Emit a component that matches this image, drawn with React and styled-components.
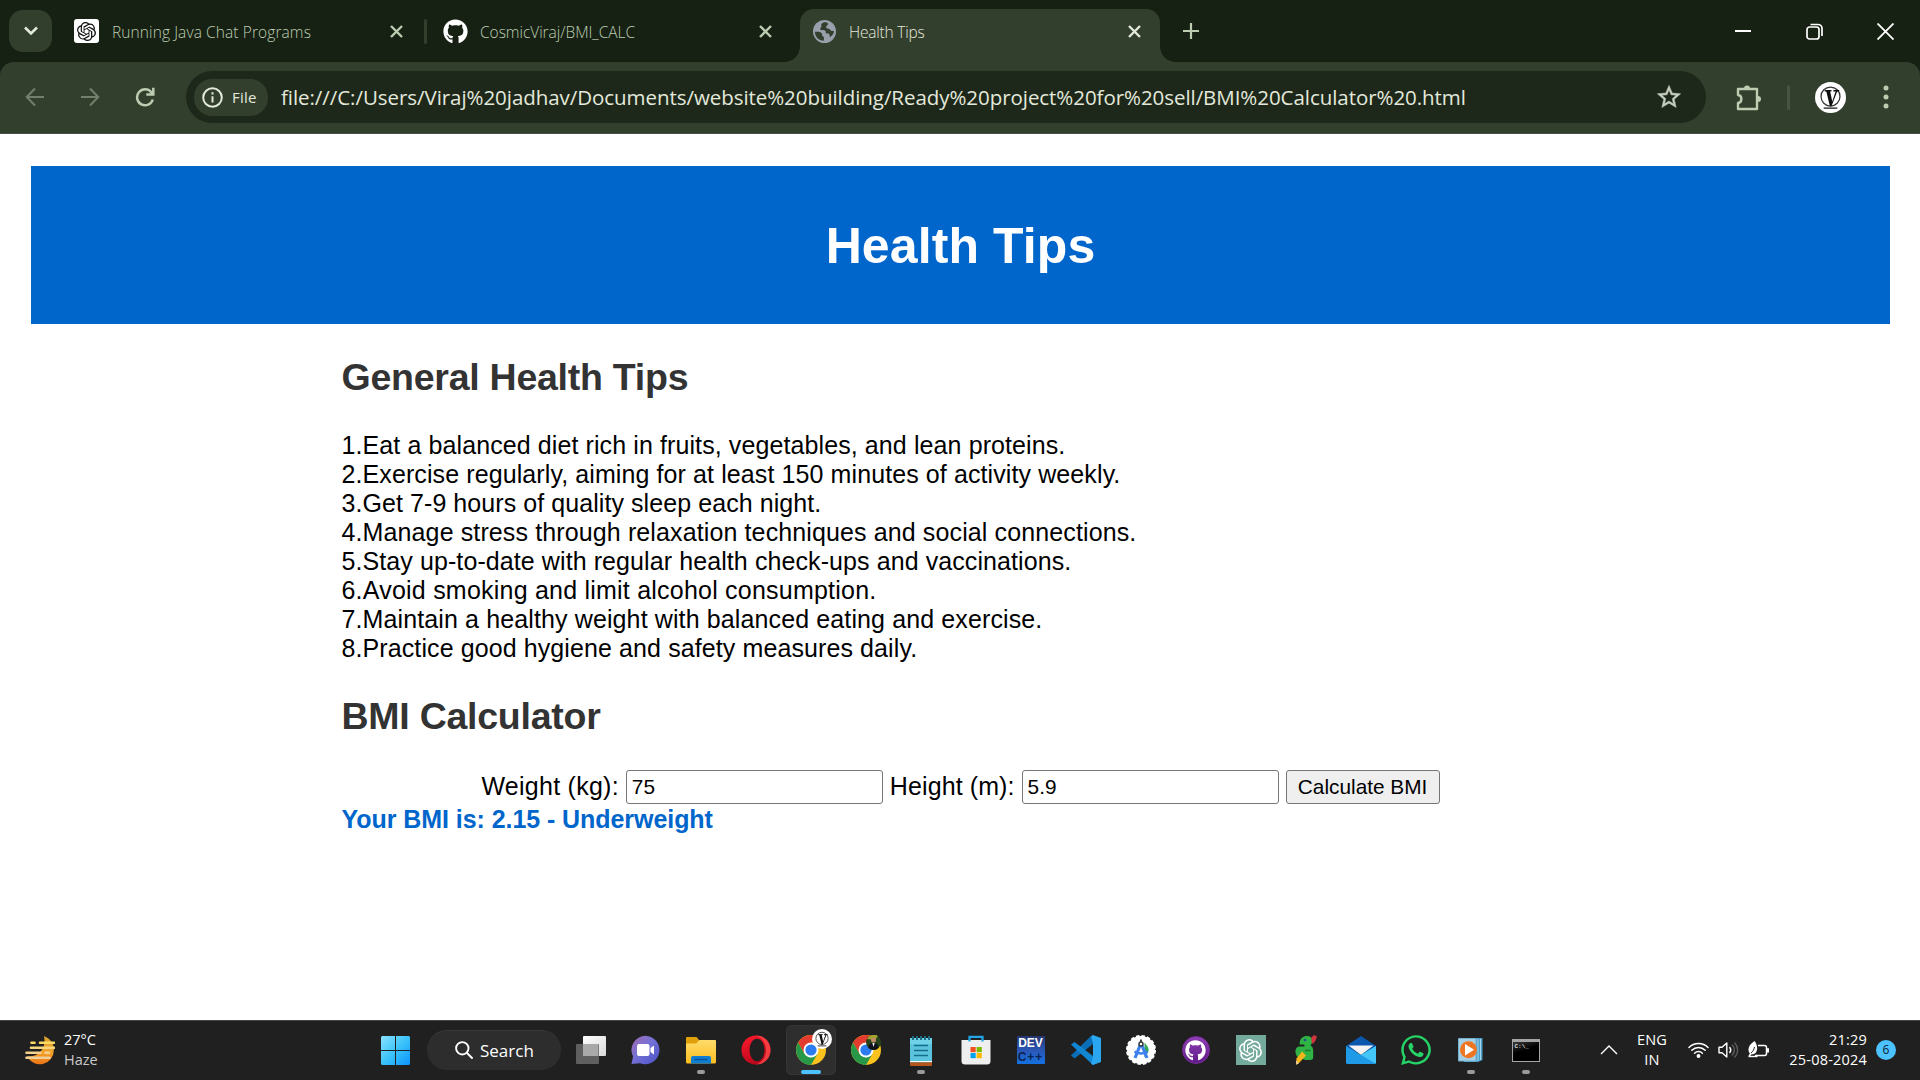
import React from 'react';
import styled, { createGlobalStyle } from 'styled-components';
import { FaGithub, FaWhatsapp } from 'react-icons/fa';
import { SiOpenai } from 'react-icons/si';

const GlobalStyle = createGlobalStyle`
  * { box-sizing: border-box; }
  body { margin: 0; background: #fff; overflow: hidden; }
  svg { display: block; flex: none; }
`;

const ui = `'Open Sans', 'Noto Sans', sans-serif`;
const page = `'Liberation Sans', Arial, sans-serif`;

const Screen = styled.div`
  width: 1920px;
  height: 1080px;
  display: flex;
  flex-direction: column;
  background: #fff;
`;

/* ---------- browser chrome ---------- */
const TabStrip = styled.header`
  height: 62px;
  flex: none;
  display: flex;
  background: #172113;
  font-family: ${ui};
`;
const TabSearch = styled.button`
  width: 43px;
  height: 42px;
  margin: 10px 10px 0 9px;
  padding: 0;
  border: 0;
  border-radius: 14px;
  background: #333f2d;
  display: flex;
  align-items: center;
  justify-content: center;
`;
const Tab = styled.div`
  position: relative;
  width: ${(p) => p.$w}px;
  height: ${(p) => (p.$active ? 53 : 44)}px;
  margin-top: 9px;
  padding: 0 ${(p) => p.$right}px 0 ${(p) => p.$left}px;
  display: flex;
  align-items: center;
  color: ${(p) => (p.$active ? '#e3e9dc' : '#bccdb2')};
  ${(p) =>
    p.$active &&
    `
    background: #333f2d;
    border-radius: 14px 14px 0 0;
    padding-bottom: 9px;
    &::before, &::after {
      content: '';
      position: absolute;
      bottom: 0;
      width: 15px;
      height: 15px;
    }
    &::before { left: -15px; background: radial-gradient(circle at 0 0, transparent 14.5px, #333f2d 15px); }
    &::after { right: -15px; background: radial-gradient(circle at 100% 0, transparent 14.5px, #333f2d 15px); }
  `}
`;
const TabTitle = styled.span`
  flex: 1;
  margin-left: ${(p) => p.$gap}px;
  padding-top: 1px;
  font-size: 15.5px;
  font-weight: 300;
  letter-spacing: ${(p) => p.$ls || 0}px;
  white-space: nowrap;
`;
const Tile = styled.span`
  width: 25px;
  height: 24px;
  border-radius: 3px;
  background: #fff;
  color: #111;
  display: flex;
  align-items: center;
  justify-content: center;
`;
const TabDivider = styled.i`
  width: 3px;
  height: 25px;
  margin: 19px 3px 0 -1px;
  border-radius: 2px;
  background: #333f2d;
`;
const NewTab = styled.div`
  margin: 22px 0 0 22px;
`;
const WindowButtons = styled.div`
  margin: 23px 26px 0 auto;
  display: flex;
  gap: 54px;
`;

const ToolbarBack = styled.div`
  height: 72px;
  flex: none;
  background: #172113;
`;
const Toolbar = styled.nav`
  height: 72px;
  display: flex;
  align-items: center;
  padding: 0 31px 1px 25px;
  border-radius: 14px 14px 0 0;
  border-bottom: 1px solid #464c48;
  background: #333f2d;
  color: #bccdb2;
  font-family: ${ui};
`;
const NavButtons = styled.div`
  width: 161px;
  display: flex;
  gap: 35px;
  flex: none;
`;
const Omnibox = styled.div`
  width: 1520px;
  height: 52px;
  padding: 0 23px 0 8px;
  border-radius: 26px;
  background: #1e281a;
  display: flex;
  align-items: center;
`;
const FileChip = styled.span`
  width: 74px;
  height: 37px;
  padding-left: 8px;
  gap: 9px;
  border-radius: 18px;
  background: #333f2d;
  color: #e3e9dc;
  font-size: 15px;
  letter-spacing: 0.2px;
  display: flex;
  align-items: center;
`;
const Url = styled.span`
  flex: 1;
  margin-left: 13px;
  padding-bottom: 1px;
  color: #e3e9dc;
  font-size: 20.5px;
  letter-spacing: -0.055px;
  white-space: nowrap;
`;
const ToolbarDivider = styled.i`
  width: 3px;
  height: 25px;
  margin: 0 25px 0 25px;
  border-radius: 2px;
  background: #48543f;
`;
const ExtensionSlot = styled.span`
  margin-left: 29px;
`;
const MenuSlot = styled.span`
  margin-left: auto;
`;

/* ---------- web page ---------- */
const Page = styled.main`
  height: 886px;
  flex: none;
  padding: 32px 30px 0 31px;
  font-family: ${page};
  font-size: 25px;
  line-height: 29px;
  color: #000;
`;
const Banner = styled.div`
  height: 158px;
  padding-top: 2px;
  background: #0066cc;
  display: flex;
  align-items: center;
  justify-content: center;
`;
const BannerTitle = styled.h1`
  margin: 0;
  font-size: 50px;
  line-height: 58px;
  letter-spacing: 0.1px;
  color: #fff;
`;
const Content = styled.section`
  width: 1238px;
  margin: 0 auto;
`;
const Heading = styled.h2`
  margin: ${(p) => p.$top}px 0 ${(p) => p.$bottom}px;
  font-size: 37.5px;
  line-height: 43px;
  letter-spacing: -0.25px;
  color: #333;
`;
const Tips = styled.div`
  display: flex;
  flex-direction: column;
`;
const Tip = styled.span`
  letter-spacing: ${(p) => p.$ls}px;
`;
const Form = styled.form`
  display: flex;
  align-items: center;
  justify-content: center;
  gap: 7px;
  height: 34px;
`;
const Label = styled.label`
  padding-bottom: 2px;
  letter-spacing: ${(p) => p.$ls}px;
`;
const Field = styled.input`
  width: 257px;
  height: 34px;
  padding: 1px 5px;
  border: 1px solid #767676;
  border-radius: 3px;
  background: #fff;
  font: 20.8px ${page};
  color: #000;
  outline: none;
`;
const Submit = styled.button`
  width: 154px;
  height: 34px;
  padding: 0;
  border: 1px solid #767676;
  border-radius: 3px;
  background: #efefef;
  font: 20.8px ${page};
  color: #000;
`;
const Result = styled.div`
  margin-top: 1px;
  font-weight: bold;
  color: #0066cc;
  letter-spacing: -0.06px;
`;

/* ---------- taskbar ---------- */
const Taskbar = styled.footer`
  height: 60px;
  flex: none;
  padding-bottom: 1px;
  display: flex;
  align-items: center;
  background: #202020;
  border-top: 1px solid #434846;
  color: #fff;
  font-family: ${ui};
`;
const Weather = styled.div`
  width: 381px;
  padding-left: 25px;
  display: flex;
  align-items: center;
  gap: 9px;
`;
const TwoLines = styled.div`
  margin-top: -1px;
  display: flex;
  flex-direction: column;
  font-size: 14.5px;
  line-height: 20px;
  text-align: ${(p) => p.$align || 'left'};
  letter-spacing: ${(p) => p.$ls || 0}px;
  white-space: nowrap;
`;
const Dim = styled.span`
  color: #c9c9c9;
`;
const SearchPill = styled.div`
  width: 134px;
  height: 40px;
  margin: 0 2px 0 17px;
  padding: 0 0 1px 28px;
  gap: 7px;
  border-radius: 20px;
  background: #2d2d2d;
  border-top: 1px solid #393939;
  display: flex;
  align-items: center;
  font-size: 17px;
`;
const Apps = styled.div`
  display: flex;
`;
const AppSlot = styled.div`
  width: 55px;
  height: 50px;
  padding: 0 2.5px;
  display: flex;
  flex-direction: column;
`;
const AppTile = styled.div`
  height: 50px;
  padding-top: 9px;
  border-radius: 6px;
  background: ${(p) => (p.$active ? '#2e2e2e' : 'transparent')};
  box-shadow: ${(p) => (p.$active ? 'inset 0 0 0 1px #353535' : 'none')};
  display: flex;
  flex-direction: column;
  align-items: center;
  gap: 4px;
`;
const Indicator = styled.i`
  width: ${(p) => (p.$active ? 20 : 8)}px;
  height: 4px;
  border-radius: 2px;
  background: ${(p) => (p.$active ? '#4cc2ff' : '#9a9a9a')};
`;
const IconBox = styled.div`
  position: relative;
  width: 32px;
  height: 32px;
  display: flex;
  align-items: center;
  justify-content: center;
`;
const Tray = styled.div`
  flex: 1;
  display: flex;
  align-items: center;
  padding-right: 24px;
`;
const TrayChevron = styled.span`
  margin-left: 47px;
`;
const Language = styled.div`
  width: 60px;
  margin: 0 6px 0 4px;
`;
const TrayIcons = styled.div`
  display: flex;
  align-items: center;
  gap: 9px;
`;
const Clock = styled.div`
  margin-left: auto;
`;
const Badge = styled.span`
  width: 20px;
  height: 20px;
  margin-left: 9px;
  border-radius: 50%;
  background: #4cc2ff;
  color: #10222e;
  font-size: 12px;
  line-height: 20px;
  text-align: center;
`;

/* ---------- drawings ---------- */
const Cross = ({ size = 13, w = 2.4 }) => (
  <svg width={size} height={size} viewBox="0 0 13 13" stroke="currentColor" strokeWidth={w} fill="none">
    <path d="M1 1l11 11M12 1L1 12" />
  </svg>
);

const Globe = () => (
  <svg width="23" height="23" viewBox="0 0 24 24">
    <circle cx="12" cy="12" r="12" fill="#9aa0ab" />
    <path
      d="M2 12.2c3 0 6.500-.3 7.500 2.300.5 1.200-.4 1.800.8 2.500 1.200.6 1.300 1.500 1 4.700C6 21.500 2 17.500 2 12.200zM12 2.300c-2 .3-4 2-3.300 3.500.8 1.500-.6 2-1.200 3-.5 1.300.8 1.800 2.500 1.700 3 0 3.500 1.200 3.300 2.500 0 1.200 1.700 1 2.700 1.200 1.500.4 1.300 2 1.500 3.800 2.500-1.500 4.500-4 4.400-6.500-.9-.1-1.900.4-3.100-.4-1.200-.9-1-2-2.500-2.100-1.800 0-2.900-.8-2.500-2.300.4-1.400 2-1.300 2-2.600 0-1.400-2.300-1.900-3.800-1.800z"
      fill="#333f2d"
    />
  </svg>
);

const Arrow = ({ flip }) => (
  <svg width="20" height="20" viewBox="0 0 20 20" fill="none" stroke="#71806a" strokeWidth="2">
    <path d={flip ? 'M1 10h17M10 1.500L18.300 10 10 18.500' : 'M19 10H2M10 1.500L1.700 10l8.300 8.500'} />
  </svg>
);

const Reload = () => (
  <svg width="20" height="20" viewBox="0 0 20 20" fill="none" stroke="#bccdb2" strokeWidth="2.500">
    <path d="M17.800 12.500a8 8 0 1 1-1.500-7.300L18 7.300" />
    <path d="M18.300 .8v6.700h-7" />
  </svg>
);

const VMark = ({ size }) => (
  <svg width={size} height={size} viewBox="0 0 32 32">
    <circle cx="16" cy="16" r="16" fill="#fff" />
    <circle cx="16" cy="15" r="9.800" fill="none" stroke="#333" strokeWidth="1.300" />
    <path d="M10 9h7M19 9h6" stroke="#111" strokeWidth="1.500" />
    <path d="M11.500 9h4l2.300 11L21.500 9h1.700L17 25h-1.600z" fill="#111" />
    <path d="M9 27h14" stroke="#555" strokeWidth="1.800" />
  </svg>
);

const Weathers = () => (
  <svg width="30" height="29" viewBox="0 0 30 29">
    <defs>
      <linearGradient id="moon" x1="0" y1="0" x2="0" y2="1">
        <stop offset="0" stopColor="#dba22e" />
        <stop offset=".6" stopColor="#f2a02a" />
        <stop offset="1" stopColor="#ee7414" />
      </linearGradient>
    </defs>
    <path d="M19 0C26 3 29 8 28.800 14A14 14 0 0 1 2 20c9 2 20-5 17-20z" fill="url(#moon)" />
    <g stroke="#f3d78a" strokeWidth="2.600" strokeLinecap="round">
      <path d="M6.500 6.800h3M15 6.800h14" stroke="#f8da63" />
      <path d="M6 11.800h23" stroke="#f6d77d" />
      <path d="M1.500 16.700h14M20.500 16.700h3.500" stroke="#f5d08a" />
      <path d="M1.500 21.700h23" stroke="#efcf98" />
    </g>
  </svg>
);

const Start = () => (
  <svg width="29" height="29" viewBox="0 0 29 29">
    <defs>
      <linearGradient id="win" x1="0" y1="0" x2="1" y2="1">
        <stop offset="0" stopColor="#8ae2ff" />
        <stop offset=".5" stopColor="#3cc3fa" />
        <stop offset="1" stopColor="#0a93fb" />
      </linearGradient>
    </defs>
    <path d="M1 0h13v14H0V1zM15 0h13l1 1v13H15zM0 15h14v14H1l-1-1zM15 15h14v13l-1 1H15z" fill="url(#win)" />
  </svg>
);

const TaskView = () => (
  <svg width="30" height="30" viewBox="0 0 30 30">
    <defs>
      <linearGradient id="tv" x1="0" y1="0" x2="1" y2="1">
        <stop offset="0" stopColor="#fff" />
        <stop offset="1" stopColor="#d8d8d8" />
      </linearGradient>
    </defs>
    <rect x="7" y="1" width="23" height="20" rx="1" fill="url(#tv)" />
    <rect x="0" y="9" width="23" height="20" rx="1" fill="#6b6b6b" opacity=".85" />
    <path d="M7 9h15v12H7z" fill="#a9a9a9" />
  </svg>
);

const ChatApp = () => (
  <svg width="30" height="30" viewBox="0 0 30 30">
    <defs>
      <linearGradient id="chat" x1="0" y1="0" x2="1" y2="1">
        <stop offset="0" stopColor="#a56bb0" />
        <stop offset=".45" stopColor="#7471d6" />
        <stop offset="1" stopColor="#4b50c6" />
      </linearGradient>
    </defs>
    <path d="M14.500 .8A14.200 14.200 0 1 1 9 28.200L.5 29 2 21.500A14.200 14.200 0 0 1 14.500 .8z" fill="url(#chat)" />
    <rect x="6" y="9" width="12.500" height="12" rx="2" fill="#fff" />
    <path d="M19.500 13l3.500-2.500v9L19.500 17z" fill="#fff" />
  </svg>
);

const Explorer = () => (
  <svg width="30" height="30" viewBox="0 0 30 30">
    <defs>
      <linearGradient id="fold" x1="0" y1="0" x2="0" y2="1">
        <stop offset="0" stopColor="#ffdc6a" />
        <stop offset="1" stopColor="#fbbd1e" />
      </linearGradient>
    </defs>
    <path d="M0 3a1 1 0 0 1 1-1h9.500l3 3.500V10H0z" fill="#e0a00c" />
    <path d="M0 8.500h10L13.500 5H29a1 1 0 0 1 1 1v21a1.500 1.500 0 0 1-1.500 1.500h-27A1.500 1.500 0 0 1 0 27z" fill="url(#fold)" />
    <path d="M5 28.500V23a2 2 0 0 1 2-2h16a2 2 0 0 1 2 2v5.500z" fill="#0f7ed2" />
    <path d="M8.500 24.500h13" stroke="#0b4f94" strokeWidth="1.400" />
  </svg>
);

const Opera = () => (
  <svg width="30" height="30" viewBox="0 0 30 30">
    <defs>
      <linearGradient id="op" x1="0" y1="0" x2=".6" y2="1">
        <stop offset="0" stopColor="#ff1b2d" />
        <stop offset="1" stopColor="#b5061a" />
      </linearGradient>
    </defs>
    <path d="M15 0.500C6.500 .5 .5 7 .5 15S6.500 29.500 15 29.500s14.500-6.500 14.500-14.500S23.500 .5 15 .5z" fill="url(#op)" />
    <path d="M15 .5c9 0 14.500 7 14.500 14.500S24 29.500 15 29.500c8-3 10-9 10-14.500S23 3.500 15 .5z" fill="#ff4a4a" opacity=".8" />
    <ellipse cx="16" cy="15" rx="7.500" ry="11.300" fill="#202020" />
  </svg>
);

const ChromeLogo = () => (
  <svg width="30" height="30" viewBox="-15 -15 30 30">
    <circle r="15" fill="#fcc31e" />
    <path d="M-12.990-7.500A15 15 0 0 1 12.990-7.500H0L-6.500 3.750z" fill="#e33b2e" />
    <path d="M-12.990-7.500A15 15 0 0 0 0 15L6.500 3.750 0 7.500-6.500 3.750z" fill="#279847" />
    <circle r="7.500" fill="#fff" />
    <circle r="5.600" fill="#2b7cf0" />
  </svg>
);

const Overlay = styled.span`
  position: absolute;
  top: ${(p) => p.$top}px;
  right: ${(p) => p.$right}px;
`;

const Portrait = () => (
  <svg width="15" height="15" viewBox="0 0 15 15">
    <circle cx="7.500" cy="7.500" r="7.500" fill="#28421b" />
    <path d="M1 4a7.500 7.500 0 0 1 11-3L9 5z" fill="#a0a32c" />
    <circle cx="7.500" cy="5" r="2.500" fill="#c08b68" />
    <path d="M2.500 13c.3-4 2-5 5-5s4.700 1 5 5a7.500 7.500 0 0 1-10 0z" fill="#10141a" />
    <path d="M6.300 8h2.400L7.500 12z" fill="#eee" />
  </svg>
);

const Notes = () => (
  <svg width="24" height="31" viewBox="0 0 24 31">
    <path d="M1 3h22v23H1z" fill="#5cc3dc" />
    <path d="M1 3h22v6H1z" fill="#70d2e6" />
    <path d="M1 26h22v1.500H1z" fill="#fff" />
    <path d="M1 27.500h22V30a1 1 0 0 1-1 1H2a1 1 0 0 1-1-1z" fill="#b5561c" />
    <path d="M4 1v4M8 1v4M12 1v4M16 1v4M20 1v4" stroke="#1a6c85" strokeWidth="2" />
    <path d="M5 10.500h14M5 15.500h14M5 20.500h14" stroke="#146f8c" strokeWidth="1.700" />
  </svg>
);

const Store = () => (
  <svg width="30" height="30" viewBox="0 0 30 30">
    <path d="M8.500 7V1.800h13V7" fill="none" stroke="#22a5e8" strokeWidth="2.200" />
    <path d="M.5 5h29v21a3.500 3.500 0 0 1-3.500 3.500H4A3.500 3.500 0 0 1 .5 26z" fill="#efefef" />
    <path d="M8.500 5v1.500M21.500 5v1.500" stroke="#22a5e8" strokeWidth="2.200" />
    <path d="M9.500 12h5.200v5.200H9.500z" fill="#f25022" />
    <path d="M15.600 12h5.200v5.200h-5.200z" fill="#7fba00" />
    <path d="M9.500 18h5.200v5.200H9.500z" fill="#00a4ef" />
    <path d="M15.600 18h5.200v5.200h-5.200z" fill="#ffb900" />
  </svg>
);

const DevTile = styled.span`
  width: 28px;
  height: 28px;
  background: linear-gradient(#26356f, #2b56b4 50%, #1371e0);
  display: flex;
  flex-direction: column;
  align-items: center;
  font: bold 12px/14px 'Liberation Sans', sans-serif;
  color: #fff;
`;
const DevPlus = styled.span`
  letter-spacing: 1px;
  color: #0b2350;
`;

const VsCode = () => (
  <svg width="30" height="30" viewBox="0 0 30 30">
    <path d="M22 0v9L3.500 23.500 0 20.500 19 2z" fill="#0a6fb8" />
    <path d="M3.500 7L22 21v9L0 9.500z" fill="#1187d4" />
    <path d="M22 0l8 3v24l-8 3-2-1.500 2-6.500V8l-2-6.500z" fill="#2ba7f2" />
  </svg>
);

const Studio = () => (
  <svg width="30" height="30" viewBox="0 0 30 30">
    <circle cx="15" cy="15" r="14" fill="#fff" />
    <circle cx="15" cy="15" r="14" fill="none" stroke="#fff" strokeWidth="2" strokeDasharray="3.500 2" />
    <path d="M20 12a5 5 0 0 1 0 6z" fill="#31a853" stroke="#31a853" strokeWidth="3" />
    <path d="M15 8L9 23M15 8l6 15" stroke="#3f82ee" strokeWidth="3.200" />
    <path d="M8.500 16.500c4 2.500 9 2.500 13 0" stroke="#3f82ee" strokeWidth="2.500" fill="none" />
    <circle cx="15" cy="9" r="2" fill="#fff" stroke="#333" strokeWidth="1.400" />
    <path d="M15 4.500V7" stroke="#333" strokeWidth="1.800" />
  </svg>
);

const Disc = styled.span`
  width: 28px;
  height: 28px;
  border-radius: 50%;
  background: linear-gradient(#8f3fb5, #5e1b87);
  border: 1px solid #7d2ba2;
  color: #fff;
  display: flex;
  align-items: center;
  justify-content: center;
`;
const GptTile = styled.span`
  width: 30px;
  height: 30px;
  background: #74aa9c;
  color: #fff;
  display: flex;
  align-items: center;
  justify-content: center;
`;

const Parrot = () => (
  <svg width="24" height="30" viewBox="0 0 24 30">
    <path
      d="M6 6C7 2.500 10 1 13 1c3.500 0 5 1.500 5 4.500V7c0 1.500-1 2.500-1.500 3.500 2 1 2.700 3 2.700 5.500v6c0 2-1 3-3 3h-5L3 21.500C.5 17 1 12.500 5 11.500h5.500c.5-1.500-.5-2-2-2H5.500z"
      fill="#2fb344"
    />
    <path d="M11 15.500h5.500" stroke="#1c7d2d" strokeWidth="1.600" />
    <circle cx="11" cy="5" r="1.300" fill="#1e4e8c" />
    <path d="M17.500 2.500L20 0l3 1.500-1.500 4-2.500 3.500-1.500-2z" fill="#d3343e" />
    <path d="M8 16.500l4 4-7 7.500-3 1.500.5-6z" fill="#f7b51c" />
    <path d="M2.300 25.500l2.700 2.700-3 1.500z" fill="#f1d0a0" />
  </svg>
);

const Mail = () => (
  <svg width="30" height="28" viewBox="0 0 30 28">
    <path d="M0 10L15 0l15 10v6H0z" fill="#0a58ad" />
    <path d="M2.500 9.500h25L15 19z" fill="#f3f3f3" />
    <path d="M0 10l15 9 15-9v16.500a1.500 1.500 0 0 1-1.500 1.500h-27A1.500 1.500 0 0 1 0 26.500z" fill="#1f9ae6" />
    <path d="M30 10v16.500a1.500 1.500 0 0 1-.5 1L15 19z" fill="#45c6f8" />
  </svg>
);

const MediaPlayer = () => (
  <svg width="26" height="26" viewBox="0 0 26 26">
    <path d="M6 1h18.500v22L20 25H6z" fill="#4d9dc8" />
    <path d="M20 2v22M22.500 2v21" stroke="#a8d8ee" strokeWidth="1" />
    <path d="M.5 1.500H18v22.500H.5z" fill="#a7cfe3" stroke="#6fb0cf" />
    <circle cx="10.500" cy="12.800" r="8.500" fill="#ee7623" />
    <path d="M7 7v11.500l9-5.700z" fill="#fff" />
  </svg>
);

const Cmd = styled.span`
  width: 28px;
  height: 23px;
  padding: 1px 0 0 2px;
  border: 1px solid #a5a5a5;
  border-top-width: 3px;
  background: linear-gradient(160deg, #3a3a3a, #000 45%);
  font: bold 6px/7px 'Liberation Mono', monospace;
  color: #ddd;
`;

const Wifi = () => (
  <svg width="21" height="16" viewBox="0 0 21 16" fill="none" stroke="#fff" strokeWidth="1.500" strokeLinecap="round">
    <path d="M1 5.500a13.500 13.500 0 0 1 19 0M3.800 8.300a9.500 9.500 0 0 1 13.400 0M6.600 11.200a5.500 5.500 0 0 1 7.800 0" />
    <circle cx="10.500" cy="14" r="1.200" fill="#fff" />
  </svg>
);

const Speaker = () => (
  <svg width="21" height="18" viewBox="0 0 21 18" fill="none" stroke="#fff" strokeWidth="1.400" strokeLinejoin="round" strokeLinecap="round">
    <path d="M1 6.200h3L8.800 2v14L4 11.800H1z" />
    <path d="M11.800 6.500a4 4 0 0 1 0 5" />
    <path d="M14.300 4a7 7 0 0 1 0 10M16.800 2a10 10 0 0 1 0 14" stroke="#5c5c5c" />
  </svg>
);

const Battery = () => (
  <svg width="21" height="18" viewBox="0 0 21 18">
    <path d="M10 4.500h6.500a2 2 0 0 1 2 2v6a2 2 0 0 1-2 2H7" fill="none" stroke="#fff" strokeWidth="1.500" />
    <path d="M19 7.300h2v4.200h-2z" fill="#fff" />
    <path d="M6.500 0c2.500 3 4 8.500 1 12-1 1-2.500 1.300-4 1.200L2 15.500.5 14.500l1.500-2C-.5 9.500-.5 4.500 6.500 0z" fill="#fff" />
    <path d="M3 12c2-1.500 3-3.500 3.500-6" stroke="#202020" strokeWidth="1" fill="none" />
    <path d="M.5 15.500h9" stroke="#fff" strokeWidth="1.400" />
  </svg>
);

const tips = [
  { text: 'Eat a balanced diet rich in fruits, vegetables, and lean proteins.', ls: 0.1 },
  { text: 'Exercise regularly, aiming for at least 150 minutes of activity weekly.', ls: 0.1 },
  { text: 'Get 7-9 hours of quality sleep each night.', ls: 0.07 },
  { text: 'Manage stress through relaxation techniques and social connections.', ls: 0.12 },
  { text: 'Stay up-to-date with regular health check-ups and vaccinations.', ls: 0.09 },
  { text: 'Avoid smoking and limit alcohol consumption.', ls: 0.22 },
  { text: 'Maintain a healthy weight with balanced eating and exercise.', ls: 0.12 },
  { text: 'Practice good hygiene and safety measures daily.', ls: 0.1 },
];

const apps = [
  { id: 'taskview', icon: <TaskView /> },
  { id: 'chat', icon: <ChatApp /> },
  { id: 'explorer', icon: <Explorer />, open: true },
  { id: 'opera', icon: <Opera /> },
  {
    id: 'chrome',
    active: true,
    open: true,
    icon: (
      <>
        <ChromeLogo />
        <Overlay $top={-5} $right={-5}><VMark size={20} /></Overlay>
      </>
    ),
  },
  {
    id: 'chrome-profile',
    icon: (
      <>
        <ChromeLogo />
        <Overlay $top={1} $right={1}><Portrait /></Overlay>
      </>
    ),
  },
  { id: 'notes', icon: <Notes />, open: true },
  { id: 'store', icon: <Store /> },
  { id: 'dev', icon: <DevTile>DEV<DevPlus>C++</DevPlus></DevTile> },
  { id: 'vscode', icon: <VsCode /> },
  { id: 'studio', icon: <Studio /> },
  { id: 'github', icon: <Disc><FaGithub size={21} /></Disc> },
  { id: 'gpt', icon: <GptTile><SiOpenai size={23} /></GptTile> },
  { id: 'parrot', icon: <Parrot /> },
  { id: 'mail', icon: <Mail /> },
  { id: 'whatsapp', icon: <FaWhatsapp size={34} color="#25d366" /> },
  { id: 'media', icon: <MediaPlayer />, open: true },
  { id: 'cmd', icon: <Cmd>C:\_</Cmd>, open: true },
];

export default function App() {
  return (
    <Screen>
      <GlobalStyle />
      <TabStrip>
        <TabSearch>
          <svg width="14" height="10" viewBox="0 0 14 10" fill="none" stroke="#e3e9dc" strokeWidth="2.600">
            <path d="M1 1.500l6 6 6-6" />
          </svg>
        </TabSearch>
        <Tab $w={363} $left={12} $right={22}>
          <Tile><SiOpenai size={19} /></Tile>
          <TabTitle $gap={13} $ls={0.1}>Running Java Chat Programs</TabTitle>
          <Cross />
        </Tab>
        <TabDivider />
        <Tab $w={370} $left={13} $right={28}>
          <FaGithub size={25} color="#fff" />
          <TabTitle $gap={12} $ls={-0.04}>CosmicViraj/BMI_CALC</TabTitle>
          <Cross />
        </Tab>
        <Tab $w={360} $left={13} $right={19} $active>
          <Globe />
          <TabTitle $gap={13} $ls={-0.2}>Health Tips</TabTitle>
          <Cross />
        </Tab>
        <NewTab>
          <svg width="18" height="18" viewBox="0 0 18 18" stroke="#bccdb2" strokeWidth="2.200">
            <path d="M9 1v16M1 9h16" />
          </svg>
        </NewTab>
        <WindowButtons>
          <svg width="17" height="17" viewBox="0 0 17 17"><path d="M0 8h16" stroke="#fff" strokeWidth="2" /></svg>
          <svg width="17" height="17" viewBox="0 0 17 17" fill="none" stroke="#fff" strokeWidth="1.700">
            <rect x="1" y="4" width="12" height="12" rx="2.500" />
            <path d="M4.500 1.500H12a4 4 0 0 1 4 4V13" />
          </svg>
          <svg width="17" height="17" viewBox="0 0 17 17" stroke="#fff" strokeWidth="1.800"><path d="M.5 .5l16 16M16.500 .5l-16 16" /></svg>
        </WindowButtons>
      </TabStrip>
      <ToolbarBack>
        <Toolbar>
          <NavButtons>
            <Arrow />
            <Arrow flip />
            <Reload />
          </NavButtons>
          <Omnibox>
            <FileChip>
              <svg width="21" height="21" viewBox="0 0 21 21" fill="none" stroke="#e3e9dc" strokeWidth="2">
                <circle cx="10.500" cy="10.500" r="9.300" />
                <path d="M10.500 9.300v6.200M10.500 5.300v2.200" />
              </svg>
              File
            </FileChip>
            <Url>
              file:///C:/Users/Viraj%20jadhav/Documents/website%20building/Ready%20project%20for%20sell/BMI%20Calculator%20.html
            </Url>
            <svg width="28" height="28" viewBox="0 0 24 24" fill="#c5cdbf" stroke="#c5cdbf" strokeWidth=".4">
              <path d="M22 9.240l-7.190-.62L12 2 9.190 8.630 2 9.240l5.460 4.730L5.820 21 12 17.270 18.180 21l-1.630-7.030L22 9.240zM12 15.400l-3.760 2.270 1-4.280-3.320-2.880 4.380-.38L12 6.100l1.710 4.040 4.380.38-3.320 2.880 1 4.280L12 15.400z" />
            </svg>
          </Omnibox>
          <ExtensionSlot>
            <svg width="27" height="27" viewBox="0 0 27 27" fill="none" stroke="#bccdb2" strokeWidth="2.400" strokeLinejoin="round">
              <path d="M3 5h19v20H3v-6c4.500-.5 4.500-7.500 0-8z" />
              <path d="M9 4.500a3 3 0 0 1 6 0zM23 12a3 3 0 0 1 0 6z" fill="#bccdb2" stroke="none" />
              <circle cx="12.500" cy="3.500" r="1.800" fill="#bccdb2" stroke="none" />
            </svg>
          </ExtensionSlot>
          <ToolbarDivider />
          <VMark size={31} />
          <MenuSlot>
            <svg width="6" height="24" viewBox="0 0 6 24" fill="#bccdb2">
              <circle cx="3" cy="3" r="2.500" />
              <circle cx="3" cy="12" r="2.500" />
              <circle cx="3" cy="21" r="2.500" />
            </svg>
          </MenuSlot>
        </Toolbar>
      </ToolbarBack>

      <Page>
        <Banner>
          <BannerTitle>Health Tips</BannerTitle>
        </Banner>
        <Content>
          <Heading $top={32} $bottom={32}>General Health Tips</Heading>
          <Tips>
            {tips.map((t, i) => (
              <Tip key={t.text} $ls={t.ls}>{`${i + 1}.${t.text}`}</Tip>
            ))}
          </Tips>
          <Heading $top={32} $bottom={32}>BMI Calculator</Heading>
          <Form>
            <Label $ls={0.26}>Weight (kg):</Label>
            <Field defaultValue="75" />
            <Label $ls={0.1}>Height (m):</Label>
            <Field defaultValue="5.9" />
            <Submit type="button">Calculate BMI</Submit>
          </Form>
          <Result>Your BMI is: 2.15 - Underweight</Result>
        </Content>
      </Page>

      <Taskbar>
        <Weather>
          <Weathers />
          <TwoLines>
            <span>27°C</span>
            <Dim>Haze</Dim>
          </TwoLines>
        </Weather>
        <Start />
        <SearchPill>
          <svg width="18" height="18" viewBox="0 0 18 18" fill="none" stroke="#fff" strokeWidth="1.900" strokeLinecap="round">
            <circle cx="7.300" cy="7.300" r="6.200" />
            <path d="M12 12l5 5" />
          </svg>
          Search
        </SearchPill>
        <Apps>
          {apps.map((a) => (
            <AppSlot key={a.id}>
              <AppTile $active={a.active}>
                <IconBox>{a.icon}</IconBox>
                {a.open && <Indicator $active={a.active} />}
              </AppTile>
            </AppSlot>
          ))}
        </Apps>
        <Tray>
          <TrayChevron>
            <svg width="18" height="10" viewBox="0 0 18 10" fill="none" stroke="#fff" strokeWidth="1.400">
              <path d="M1 9l8-8 8 8" />
            </svg>
          </TrayChevron>
          <Language>
            <TwoLines $align="center" $ls={0.2}>
              <span>ENG</span>
              <span>IN</span>
            </TwoLines>
          </Language>
          <TrayIcons>
            <Wifi />
            <Speaker />
            <Battery />
          </TrayIcons>
          <Clock>
            <TwoLines $align="right" $ls={0.2}>
              <span>21:29</span>
              <span>25-08-2024</span>
            </TwoLines>
          </Clock>
          <Badge>6</Badge>
        </Tray>
      </Taskbar>
    </Screen>
  );
}
